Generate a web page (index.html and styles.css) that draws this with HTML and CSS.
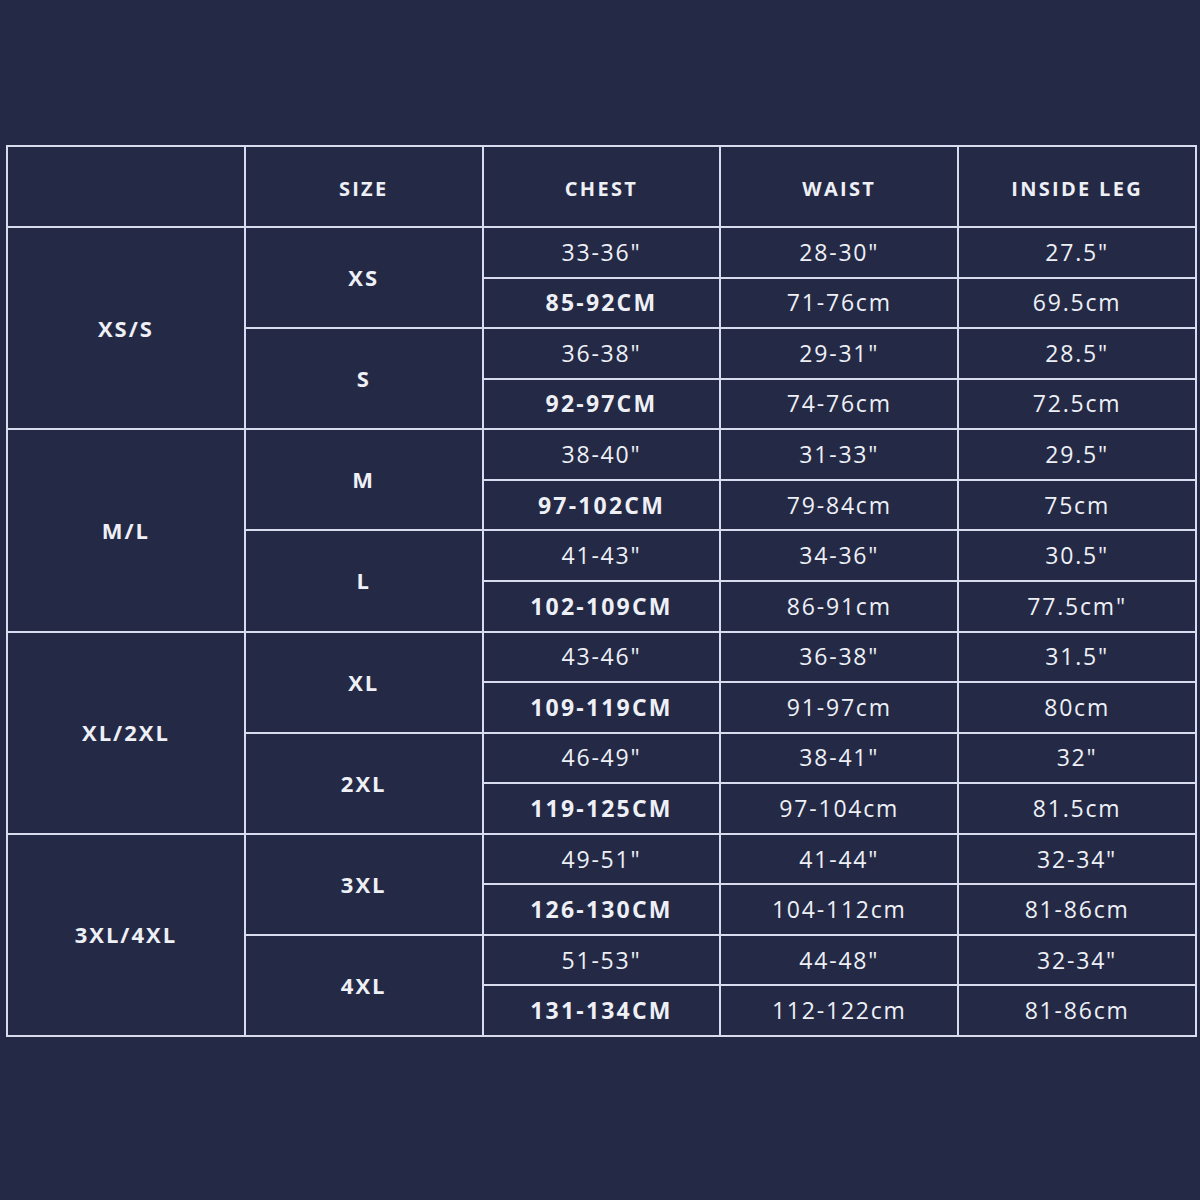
FILE: index.html
```html
<!DOCTYPE html>
<html>
<head>
<meta charset="utf-8">
<link rel="stylesheet" href="styles.css">
</head>
<body>
<div class="page">
  <div class="chart">
    <div class="cell head"></div>
    <div class="cell head">SIZE</div>
    <div class="cell head">CHEST</div>
    <div class="cell head">WAIST</div>
    <div class="cell head">INSIDE LEG</div>

    <div class="cell group">XS/S</div>
    <div class="cell size">XS</div>
    <div class="cell">33-36"</div><div class="cell">28-30"</div><div class="cell">27.5"</div>
    <div class="cell bold">85-92CM</div><div class="cell">71-76cm</div><div class="cell">69.5cm</div>
    <div class="cell size">S</div>
    <div class="cell">36-38"</div><div class="cell">29-31"</div><div class="cell">28.5"</div>
    <div class="cell bold">92-97CM</div><div class="cell">74-76cm</div><div class="cell">72.5cm</div>

    <div class="cell group">M/L</div>
    <div class="cell size">M</div>
    <div class="cell">38-40"</div><div class="cell">31-33"</div><div class="cell">29.5"</div>
    <div class="cell bold">97-102CM</div><div class="cell">79-84cm</div><div class="cell">75cm</div>
    <div class="cell size">L</div>
    <div class="cell">41-43"</div><div class="cell">34-36"</div><div class="cell">30.5"</div>
    <div class="cell bold">102-109CM</div><div class="cell">86-91cm</div><div class="cell">77.5cm"</div>

    <div class="cell group">XL/2XL</div>
    <div class="cell size">XL</div>
    <div class="cell">43-46"</div><div class="cell">36-38"</div><div class="cell">31.5"</div>
    <div class="cell bold">109-119CM</div><div class="cell">91-97cm</div><div class="cell">80cm</div>
    <div class="cell size">2XL</div>
    <div class="cell">46-49"</div><div class="cell">38-41"</div><div class="cell">32"</div>
    <div class="cell bold">119-125CM</div><div class="cell">97-104cm</div><div class="cell">81.5cm</div>

    <div class="cell group">3XL/4XL</div>
    <div class="cell size">3XL</div>
    <div class="cell">49-51"</div><div class="cell">41-44"</div><div class="cell">32-34"</div>
    <div class="cell bold">126-130CM</div><div class="cell">104-112cm</div><div class="cell">81-86cm</div>
    <div class="cell size">4XL</div>
    <div class="cell">51-53"</div><div class="cell">44-48"</div><div class="cell">32-34"</div>
    <div class="cell bold">131-134CM</div><div class="cell">112-122cm</div><div class="cell">81-86cm</div>
  </div>
</div>
</body>
</html>
```

FILE: styles.css
```css
html, body {
  margin: 0;
  padding: 0;
  background: #242a46;
}
.page {
  width: 1200px;
  height: 1200px;
  padding-top: 145px;
  padding-left: 6px;
  box-sizing: border-box;
  background: #242a46;
}
.chart {
  width: 1191px;
  height: 892px;
  box-sizing: border-box;
  padding: 2px;
  gap: 2px;
  background: #d9dcef;
  display: grid;
  grid-template-columns: repeat(5, 1fr);
  grid-template-rows: 79px repeat(16, 1fr);
  font-family: "Open Sans", "DejaVu Sans", sans-serif;
  color: #eef0f6;
}
.cell {
  background: #242a46;
  display: flex;
  align-items: center;
  justify-content: center;
  font-size: 23px;
  letter-spacing: 1.8px;
  padding-bottom: 1px;
}
.head {
  font-weight: 700;
  font-size: 20px;
  letter-spacing: 2.3px;
  padding-top: 3px;
  padding-bottom: 0;
}
.group {
  grid-column: 1;
  grid-row: span 4;
  font-weight: 700;
  font-size: 22px;
  letter-spacing: 2px;
}
.size {
  grid-column: 2;
  grid-row: span 2;
  font-weight: 700;
  font-size: 22px;
  letter-spacing: 2px;
}
.bold {
  font-weight: 700;
  letter-spacing: 2.2px;
}
```
